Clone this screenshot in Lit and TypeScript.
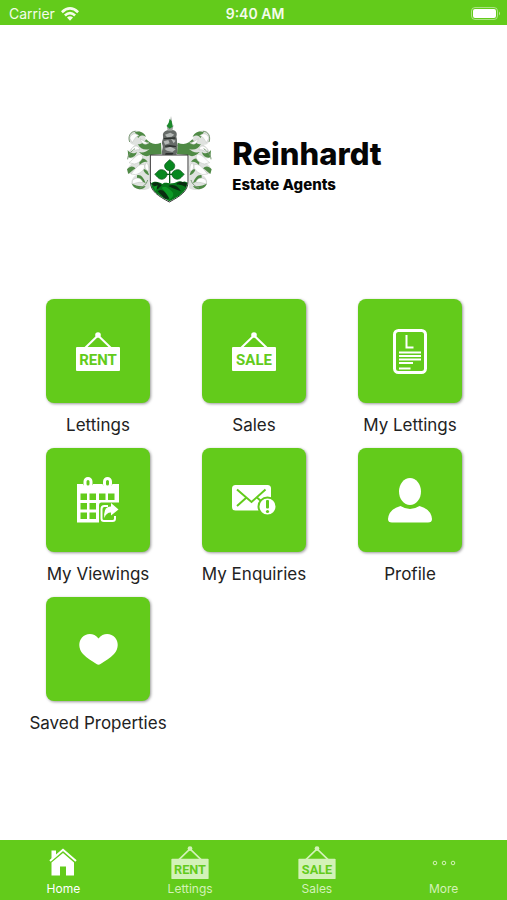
import { LitElement, html, css, svg, type TemplateResult } from "lit";
import { customElement } from "lit/decorators.js";
import { classMap } from "lit/directives/class-map.js";

interface Entry {
  label: string;
  icon: TemplateResult;
}

const sign = (word: string) => html`
  <svg class="sign" viewBox="0 0 44 39" aria-hidden="true">
    <path class="rope" d="M8 17 L22 3.5 L36 17" />
    <circle cx="22" cy="3" r="2.8" />
    <rect x="0" y="15" width="44" height="24" rx="1" />
    <text class="word" x="22" y="32.5" text-anchor="middle">${word}</text>
  </svg>
`;

const letterIcon = html`
  <svg width="34" height="45" viewBox="0 0 34 45" aria-hidden="true">
    <rect class="line thick" x="1.5" y="1.5" width="31" height="42" rx="4" />
    <path class="line" d="M13.5 6 V18.5 H20.5" />
    <path class="line fine" d="M6 23.5 H28 M6 27 H28 M6 30.5 H28 M6 34 H20 M6 39.5 H17.5" />
  </svg>
`;

const calendarIcon = html`
  <svg width="42" height="46" viewBox="0 0 42 46" aria-hidden="true">
    <path d="M0 7 H42 V25.5 H24 Q22 25.5 22 28 V45.5 H0 Z" />
    <g class="cut">
      <rect x="3.5" y="16.5" width="6.5" height="6.5" />
      <rect x="12.5" y="16.5" width="6.5" height="6.5" />
      <rect x="22" y="16.5" width="6.5" height="6.5" />
      <rect x="31" y="16.5" width="6.5" height="6.5" />
      <rect x="3.5" y="26" width="6.5" height="6.5" />
      <rect x="12.5" y="26" width="6.5" height="6.5" />
      <rect x="3.5" y="35.5" width="6.5" height="6.5" />
      <rect x="12.5" y="35.5" width="6.5" height="6.5" />
      <rect x="5.5" y="0" width="11" height="10" rx="5" />
      <rect x="25" y="0" width="11" height="10" rx="5" />
    </g>
    <path
      fill-rule="evenodd"
      d="M6.500 4.500 a4.500 4.500 0 0 1 9 0 v2.500 a4.500 4.500 0 0 1 -9 0 Z M9.500 4.500 v2.500 a1.500 1.500 0 0 0 3 0 v-2.500 a1.500 1.500 0 0 0 -3 0 Z"
    />
    <path
      fill-rule="evenodd"
      d="M26 4.500 a4.500 4.500 0 0 1 9 0 v2.500 a4.500 4.500 0 0 1 -9 0 Z M29 4.500 v2.500 a1.500 1.500 0 0 0 3 0 v-2.500 a1.500 1.500 0 0 0 -3 0 Z"
    />
    <path class="line" d="M31 29 H27.500 Q24.500 29 24.500 32 V41.500 Q24.500 44 27 44 H35.500 Q38 44 38 41.500 V39" />
    <path d="M34 26 L41.500 32.500 L34 38.500 V35.500 Q29 35.500 27.500 41 Q25.500 30 34 29.500 Z" />
  </svg>
`;

const mailIcon = html`
  <svg width="45" height="31" viewBox="0 0 45 31" aria-hidden="true">
    <rect x="0" y="0" width="39" height="25.500" rx="3.500" />
    <path class="groove" d="M5 4.500 L19.500 17 L33.500 4.500 M5 21 L14 13 M25 12.500 L30 17" />
    <circle class="ring" cx="35.500" cy="21.500" r="9" />
    <rect class="cut" x="34" y="15" width="3" height="8.500" rx="1" />
    <circle class="cut" cx="35.500" cy="26.500" r="1.600" />
  </svg>
`;

const personIcon = html`
  <svg width="44" height="45" viewBox="0 0 44 45" aria-hidden="true">
    <ellipse cx="22" cy="13.500" rx="11" ry="13.500" />
    <path d="M12.500 28 Q22 34 31.500 28 Q43 31 44 41 Q44 44.500 40 44.500 H4 Q0 44.500 0 41 Q1 31 12.500 28 Z" />
  </svg>
`;

const heartIcon = html`
  <svg width="39" height="31" viewBox="0 0 39 31" aria-hidden="true">
    <path d="M19.500 4.500 C24 -1.500 32 -1 36 3.500 C40 8.500 39.500 15 35 20 C31 24.500 26 27 21.500 30 Q19.500 31.500 17.500 30 C13 27 8 24.500 4 20 C-.5 15 -1 8.500 3 3.500 C7 -1 15 -1.500 19.500 4.500 Z" />
  </svg>
`;

const homeIcon = html`
  <svg width="28" height="28" viewBox="0 0 28 28" aria-hidden="true">
    <path d="M2.500 2.500 H7 V7 L2.500 11 Z" />
    <path class="roof" d="M1 13 L14 1.800 L27 13" />
    <path fill-rule="evenodd" d="M14 5 L25 14.500 V27.500 H2.500 V14.500 Z M11 18.500 V27.500 H17 V18.500 Z" />
  </svg>
`;

const moreIcon = html`
  <svg width="24" height="6" viewBox="0 0 24 6" aria-hidden="true">
    <g class="dots">
      <circle cx="3" cy="3" r="1.800" />
      <circle cx="12" cy="3" r="1.800" />
      <circle cx="21" cy="3" r="1.800" />
    </g>
  </svg>
`;

/* One side of the mantling; the other side is its mirror image. */
const mantling = svg`
  <g fill="#dfe2df">
    <path d="M92 104 C84 78 54 72 44 90 C36 106 46 126 60 122 C50 132 36 142 38 160 C52 168 66 160 74 148 L100 146 L104 130 Z" />
    <path d="M98 152 C84 150 78 162 68 168 C52 176 34 186 38 208 C52 214 66 206 74 194 L104 192 L104 156 Z" />
    <path d="M104 186 C88 190 80 204 66 212 C52 218 44 234 54 246 C66 260 90 262 104 252 Z" />
  </g>
  <g fill="#4f8a45">
    <path d="M138 116 C118 124 104 118 94 106 C86 116 76 124 68 120 C76 136 92 140 104 134 C96 142 84 148 72 144 C82 156 96 160 106 153 L140 150 Z" />
    <path d="M60 84 C76 78 90 88 93 99 C82 92 74 94 70 102 C66 98 62 92 60 84 Z" />
    <path d="M38 138 C46 150 58 150 66 144 C62 158 50 164 40 160 Z" />
    <path d="M72 168 C82 160 92 164 98 174 C88 172 80 176 74 184 Z" />
    <path d="M36 196 C46 184 56 186 62 194 C54 196 48 204 40 210 Z" />
    <path d="M66 214 C76 210 86 220 92 238 C82 232 72 230 66 226 Z" />
    <path d="M50 238 C60 246 76 248 92 246 C84 260 58 260 50 238 Z" />
    <path d="M84 196 C94 194 100 202 102 214 C94 212 88 206 84 196 Z" />
  </g>
  <g fill="#fdfdfd" stroke="#b9bfb9" stroke-width="1.500">
    <path d="M44 102 C52 84 66 88 72 96 C64 94 58 106 52 116 Z" />
    <path d="M76 104 C84 110 94 116 102 116 C92 124 80 122 76 104 Z" />
    <path d="M50 134 C60 120 74 126 74 138 C64 134 58 142 46 146 Z" />
    <path d="M42 176 C58 164 66 148 80 152 C88 162 76 176 58 180 Z" />
    <path d="M48 210 C62 194 70 178 88 182 C94 192 78 208 62 212 Z" />
    <path d="M52 230 C64 216 80 222 84 236 C72 232 62 238 52 240 Z" />
    <path d="M94 176 C104 184 100 194 102 202 C90 198 86 188 94 176 Z" />
  </g>
  <g class="curl">
    <path d="M44 114 C38 98 46 82 62 82" />
    <path d="M38 166 C38 154 48 142 60 134" />
    <path d="M74 252 C84 248 94 242 98 228" />
  </g>
`;

const crest = html`
  <svg class="crest" viewBox="30 30 270 270" role="img" aria-label="Reinhardt coat of arms">
    ${svg`
      <g>${mantling}</g>
      <g transform="translate(326 0) scale(-1 1)">${mantling}</g>
      <path fill="#666b68" d="M142 152 C138 140 146 132 142 122 C138 112 146 108 144 96 C142 86 150 80 160 78 L172 78 C184 80 188 88 184 98 C188 108 184 114 188 124 C184 134 190 142 184 152 Z" />
      <path fill="#b4b8b6" d="M150 92 L166 86 L178 92 L170 98 L156 100 Z M146 112 L160 108 L164 118 L150 122 Z M168 104 L182 110 L176 118 Z M148 134 L166 128 L182 136 L172 144 L156 140 Z" />
      <path fill="#2b2f2d" d="M146 102 L180 100 L182 104 L148 106 Z M150 125 L164 123 L184 126 L182 129 L150 128 Z M152 147 L176 147 L172 152 L150 152 Z" />
      <path fill="#9ba39d" d="M158 80 L155 64 L163 68 L168 36 L173 66 L176 62 L172 80 Z" />
      <path fill="#1c8a2c" d="M155 66 L161 56 L164 44 L170 52 L173 68 L164 74 Z" />
      <path fill="#ffffff" stroke="#333333" stroke-width="3" d="M106 153 H219 V232 C219 262 196 276 163 294 C130 276 106 262 106 232 Z" />
      <path fill="#06771a" d="M108 238 C120 230 132 234 142 240 C150 232 160 240 172 238 C184 238 190 228 202 234 C210 230 214 234 217 236 C216 264 192 276 163 292 C134 276 110 264 108 238 Z" />
      <path fill="#082d10" d="M110 240 C120 230 134 236 140 244 L128 256 Z M184 240 C194 228 208 234 216 238 L212 250 C202 240 192 246 184 240 Z M128 262 C140 252 150 262 164 284 L150 284 Z M160 246 C176 238 190 248 198 262 C182 256 172 252 160 246 Z" />
      <path fill="#0d9a26" d="M140 252 C148 244 158 250 170 262 C178 270 176 280 164 286 C158 272 150 262 140 252 Z M116 248 L128 244 L122 262 Z" />
      <g fill="#07871f" stroke="#0b4c17" stroke-width="2">
        <path d="M164 167 C174 174 181 180 179 188 C177 198 168 200 164 200 C160 200 151 198 149 188 C147 180 156 174 164 167 Z" />
        <path d="M119 211 C127 205 130 196 140 197 C152 198 155 206 157 211 C155 217 152 225 140 226 C130 226 127 217 119 211 Z" />
        <path d="M208 211 C200 205 197 196 187 197 C175 198 172 206 170 211 C172 217 175 225 187 226 C197 226 200 217 208 211 Z" />
      </g>
      <path fill="none" stroke="#0b5c1a" stroke-width="4" d="M164 198 V238 M154 211 H172" />
    `}
  </svg>
`;

const tiles: Entry[] = [
  { label: "Lettings", icon: sign("RENT") },
  { label: "Sales", icon: sign("SALE") },
  { label: "My Lettings", icon: letterIcon },
  { label: "My Viewings", icon: calendarIcon },
  { label: "My Enquiries", icon: mailIcon },
  { label: "Profile", icon: personIcon },
  { label: "Saved Properties", icon: heartIcon },
];

const tabs: Entry[] = [
  { label: "Home", icon: homeIcon },
  { label: "Lettings", icon: sign("RENT") },
  { label: "Sales", icon: sign("SALE") },
  { label: "More", icon: moreIcon },
];

@customElement("app-root")
export class AppRoot extends LitElement {
  static styles = css`
    :host {
      --green: #63cb1b;
      display: flex;
      flex-direction: column;
      min-height: 100vh;
      background: #ffffff;
      color: #222222;
      font-family: Inter, "Liberation Sans", sans-serif;
    }
    svg {
      display: block;
      fill: currentColor;
    }
    .status {
      display: grid;
      grid-template-columns: 1fr auto 1fr;
      align-items: center;
      height: 25px;
      padding: 2px 6px 0 9px;
      box-sizing: border-box;
      background: var(--green);
      color: #f4fceb;
      font-size: 14px;
      line-height: 20px;
    }
    .carrier {
      display: flex;
      align-items: center;
      gap: 6px;
    }
    .time {
      font-weight: 600;
    }
    .battery {
      justify-self: end;
    }
    .brand {
      display: flex;
      align-items: center;
      justify-content: center;
      gap: 17px;
      padding: 89px 0 95px;
    }
    .crest {
      width: 90px;
      height: 90px;
    }
    .title {
      padding-top: 16px;
    }
    .name {
      margin: 0;
      color: #050505;
      font-size: 31px;
      font-weight: 800;
      line-height: 36px;
    }
    .tagline {
      margin: 0;
      color: #050505;
      font-size: 15px;
      font-weight: 800;
      line-height: 26px;
    }
    .grid {
      display: grid;
      grid-template-columns: repeat(3, 1fr);
      row-gap: 10px;
      flex: 1;
      align-content: start;
      padding: 0 19px 24px 20px;
    }
    .item {
      display: flex;
      flex-direction: column;
      align-items: center;
      gap: 9px;
      padding: 0;
      border: 0;
      background: none;
      color: inherit;
      font: inherit;
      font-size: 17px;
      line-height: 26px;
      white-space: nowrap;
      cursor: pointer;
    }
    .tile {
      display: grid;
      place-items: center;
      width: 104px;
      height: 104px;
      border-radius: 8px;
      background: var(--green);
      box-shadow: 1px 1px 3px rgba(0, 0, 0, 0.4);
      color: #ffffff;
    }
    .tabs {
      position: sticky;
      bottom: 0;
      display: grid;
      grid-template-columns: repeat(4, 1fr);
      height: 60px;
      background: var(--green);
    }
    .tab {
      display: flex;
      flex-direction: column;
      align-items: center;
      padding: 5px 0 0;
      color: #d3f2b8;
      font-size: 12px;
      line-height: 18px;
      text-decoration: none;
    }
    .tab.current {
      color: #ffffff;
    }
    .glyph {
      display: grid;
      place-items: center;
      height: 35px;
    }
    .tab.current .glyph {
      height: 34px;
      padding-bottom: 1px;
    }
    .sign {
      width: 44px;
      height: 39px;
    }
    .tab .sign {
      width: 38px;
      height: 33px;
    }
    .rope,
    .line,
    .roof {
      fill: none;
      stroke: currentColor;
      stroke-width: 2;
    }
    .thick {
      stroke-width: 3;
    }
    .word {
      fill: var(--green);
      font-family: Roboto, sans-serif;
      font-size: 15px;
      font-weight: 700;
    }
    .cut {
      fill: var(--green);
    }
    .groove {
      fill: none;
      stroke: var(--green);
      stroke-width: 2;
    }
    .ring {
      stroke: var(--green);
      stroke-width: 2;
    }
    .dots {
      fill: none;
      stroke: currentColor;
      stroke-width: 1;
    }
    .curl {
      fill: none;
      stroke: #7b9a76;
      stroke-width: 3;
    }
  `;

  render() {
    return html`
      <header class="status">
        <span class="carrier">
          Carrier
          <svg width="18" height="14" viewBox="0 0 18 14" role="img" aria-label="Wi-Fi">
            <path d="M0 4.200 Q9 -4 18 4.200 L16.200 6.200 Q9 -.5 1.800 6.200 Z" />
            <path d="M3 7.500 Q9 2 15 7.500 L13.200 9.400 Q9 5.800 4.800 9.400 Z" />
            <path d="M6 10.600 Q9 8 12 10.600 L9 13.800 Z" />
          </svg>
        </span>
        <span class="time">9:40 AM</span>
        <svg class="battery" width="30" height="13" viewBox="0 0 30 13" role="img" aria-label="Battery full">
          <rect x=".5" y=".5" width="26" height="12" rx="3.500" fill="none" stroke="currentColor" stroke-opacity=".5" />
          <rect x="2" y="2" width="23" height="9" rx="2" fill="#ffffff" />
          <path d="M28 4.500 Q30 6.500 28 8.500 Z" fill-opacity=".6" />
        </svg>
      </header>
      <section class="brand">
        ${crest}
        <div class="title">
          <h1 class="name">Reinhardt</h1>
          <p class="tagline">Estate Agents</p>
        </div>
      </section>
      <main class="grid">
        ${tiles.map(
          (tile) => html`
            <button class="item" type="button">
              <span class="tile">${tile.icon}</span>
              <span>${tile.label}</span>
            </button>
          `
        )}
      </main>
      <nav class="tabs">
        ${tabs.map(
          (tab, index) => html`
            <a class=${classMap({ tab: true, current: index === 0 })} href="#">
              <span class="glyph">${tab.icon}</span>
              <span>${tab.label}</span>
            </a>
          `
        )}
      </nav>
    `;
  }
}
